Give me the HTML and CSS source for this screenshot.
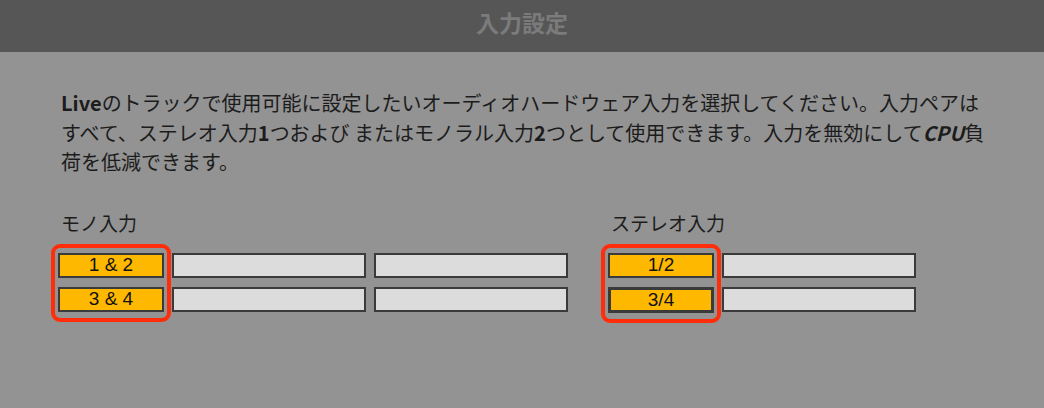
FILE: index.html
```html
<!DOCTYPE html>
<html lang="ja">
<head>
  <meta charset="UTF-8">
  <title>入力設定</title>
  <link rel="stylesheet" href="styles.css">
</head>
<body>

<div class="titlebar">入力設定</div>

<div class="content">
  <p class="intro">
    <b>Live</b>のトラックで使用可能に設定したいオーディオハードウェア入力を選択してください。入力ペアは<br>
    すべて、ステレオ入力<b>1</b>つおよび またはモノラル入力<b>2</b>つとして使用できます。入力を無効にして<b class="em">CPU</b>負<br>
    荷を低減できます。
  </p>

  <div class="groups">
    <div class="group">
      <div class="label">モノ入力</div>
      <div class="cols">
        <div class="col marked">
          <button class="ch on">1 &amp; 2</button>
          <button class="ch on">3 &amp; 4</button>
        </div>
        <div class="col wide">
          <button class="ch"></button>
          <button class="ch"></button>
        </div>
        <div class="col wide">
          <button class="ch"></button>
          <button class="ch"></button>
        </div>
      </div>
    </div>

    <div class="group">
      <div class="label">ステレオ入力</div>
      <div class="cols">
        <div class="col marked">
          <button class="ch on">1/2</button>
          <button class="ch on focus">3/4</button>
        </div>
        <div class="col wide">
          <button class="ch"></button>
          <button class="ch"></button>
        </div>
      </div>
    </div>
  </div>
</div>

</body>
</html>
```

FILE: styles.css
```css
html, body {
  height: 100%;
}

body {
  margin: 0;
  background: #939393;
  font-family: "Noto Sans CJK JP", "Noto Sans", sans-serif;
  color: #1c1c1c;
}

.titlebar {
  height: 52px;
  line-height: 45px;
  background: #565656;
  color: #7b7b7b;
  font-size: 23px;
  font-weight: bold;
  text-align: center;
}

.content {
  padding: 36px 0 40px 58px;
}

.intro {
  margin: 0 0 0 3px;
  font-size: 20px;
  line-height: 29.5px;
  white-space: nowrap;
}

.intro b {
  font-weight: 600;
}

.intro .em {
  font-weight: bold;
  font-style: italic;
}

.groups {
  display: flex;
  gap: 40px;
  margin-top: 33px;
}

.label {
  font-size: 19px;
  line-height: 26px;
  margin: 0 0 17px 3px;
}

.cols {
  display: flex;
  align-items: flex-start;
  gap: 8px;
}

.col {
  display: flex;
  flex-direction: column;
  gap: 9px;
  width: 106px;
}

.col.wide {
  width: 194px;
}

/* red frame round the first column */
.col.marked {
  padding: 2px 0 3px;
  margin: -2px 0 -3px;
  outline: 4px solid #ff2d0a;
  outline-offset: 3px;
  border-radius: 2px;
}

.ch {
  box-sizing: border-box;
  height: 25px;
  margin: 0;
  padding: 0;
  border: 2px solid #3a3a3a;
  border-radius: 0;
  background: #dcdcdc;
  font-family: "Liberation Sans", "Noto Sans", sans-serif;
  font-size: 19px;
  line-height: 20px;
  color: #111;
}

.ch.on {
  background: #ffb800;
}

.ch.focus {
  height: 26px;
  border-width: 3px;
}
```
